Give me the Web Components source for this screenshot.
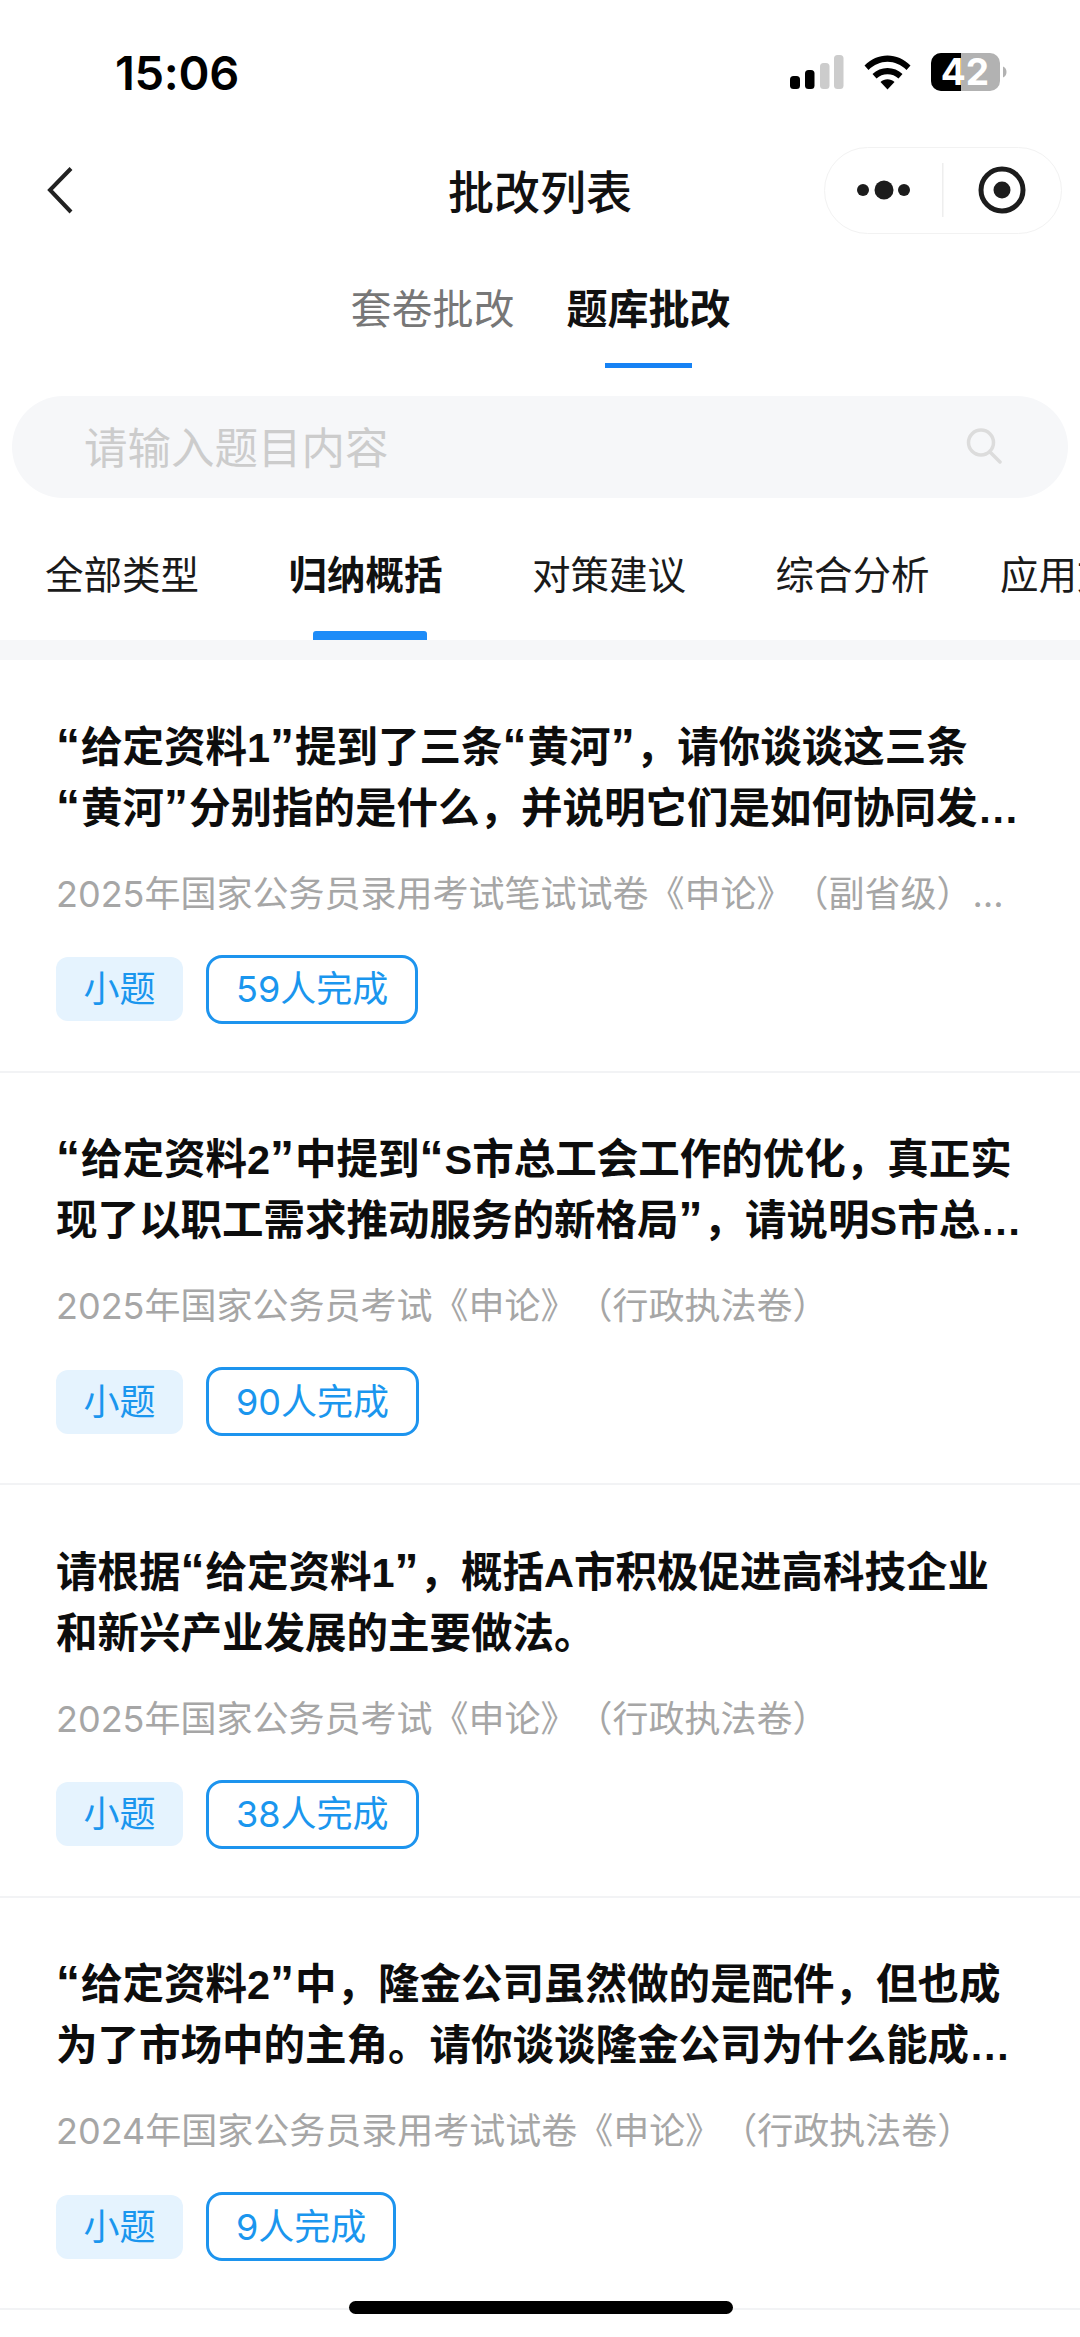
<!DOCTYPE html>
<html lang="zh-CN"><head><meta charset="utf-8"><title>批改列表</title>
<style>
html,body{margin:0;padding:0;background:#fff}
body{width:1080px;height:2337px;overflow:hidden;font-family:Inter,"Noto Sans CJK SC",sans-serif;color:#111;text-spacing-trim:space-all}
</style></head><body>
<app-screen>
  <status-bar time="15:06" battery="42"></status-bar>
  <nav-bar title="批改列表"></nav-bar>
  <mode-tabs><mode-tab>套卷批改</mode-tab><mode-tab active>题库批改</mode-tab></mode-tabs>
  <search-box placeholder="请输入题目内容"></search-box>
  <type-tabs>
    <type-tab>全部类型</type-tab><type-tab active>归纳概括</type-tab><type-tab>对策建议</type-tab><type-tab>综合分析</type-tab><type-tab last>应用文写作</type-tab>
  </type-tabs>
  <question-list>
    <question-card source="2025年国家公务员录用考试笔试试卷《申论》（副省级）…" kind="小题" done="59人完成"><i>“</i><span>给定资料1</span><i>”</i><span>提到了三条</span><i>“</i><span>黄河</span><i>”</i><span>，请你谈谈这三条</span><i>“</i><span>黄河</span><i>”</i><span>分别指的是什么，并说明它们是如何协同发…</span></question-card>
    <question-card source="2025年国家公务员考试《申论》（行政执法卷）" kind="小题" done="90人完成"><i>“</i><span>给定资料2</span><i>”</i><span>中提到</span><i>“</i><span>S市总工会工作的优化，真正实</span><span>现了以职工需求推动服务的新格局</span><i>”</i><span>，请说明S市总…</span></question-card>
    <question-card source="2025年国家公务员考试《申论》（行政执法卷）" kind="小题" done="38人完成"><span>请根据</span><i>“</i><span>给定资料1</span><i>”</i><span>，概括A市积极促进高科技企业</span><span>和新兴产业发展的主要做法。</span></question-card>
    <question-card source="2024年国家公务员录用考试试卷《申论》（行政执法卷）" kind="小题" done="9人完成"><i>“</i><span>给定资料2</span><i>”</i><span>中，隆金公司虽然做的是配件，但也成</span><span>为了市场中的主角。请你谈谈隆金公司为什么能成…</span></question-card>
  </question-list>
  <home-bar></home-bar>
</app-screen>
<script>
function def(name, css, html){
  customElements.define(name, class extends HTMLElement{
    connectedCallback(){
      if(this.shadowRoot) return;
      const r=this.attachShadow({mode:'open'});
      const h = typeof html==='function'? html(this): html;
      r.innerHTML='<style>'+css+'</style>'+h;
    }
  });
}
def('app-screen',':host{display:flex;flex-direction:column;position:relative;width:1080px;height:2337px;overflow:hidden;background:#fff}','<slot></slot>');

def('status-bar',`
:host{display:flex;align-items:center;height:127px;box-sizing:border-box;padding:16px 0 0 115px}
.t{font:600 47px/1 Inter,"Liberation Sans",sans-serif;letter-spacing:-.3px;color:#000;margin-top:1px}
.sp{flex:1}
svg{display:block}
.bat{font:700 37px Inter,"Liberation Sans",sans-serif}
`,e=>`<span class="t">${e.getAttribute('time')}</span><span class="sp"></span>
<svg width="300" height="60" viewBox="780 41 300 60">
<rect x="790" y="75" width="10" height="13" rx="3.5"/>
<rect x="805" y="69" width="9.5" height="19" rx="3.5"/>
<rect x="820" y="62" width="9.5" height="26" rx="3.5" fill="#ccc"/>
<rect x="834" y="54" width="9.5" height="34" rx="3.5" fill="#ccc"/>
<path d="M864.5 64.5C871 58 879 54.5 887.5 54.5S904 58 910.5 64.5L906.5 69C901 63.8 894.500 60.800 887.500 60.800S874 63.800 868.500 69Z"/>
<path d="M872.500 73C876.500 69.200 881.800 67 887.500 67S898.500 69.200 902.500 73L898.500 77.500C895.500 74.700 891.700 73.200 887.500 73.200S879.500 74.700 876.500 77.500Z"/>
<path d="M880.500 81C882.500 79.300 885 78.300 887.500 78.300S892.500 79.300 894.500 81L887.500 88.500Z"/>
<defs><clipPath id="l"><rect x="931" y="52" width="30" height="38"/></clipPath></defs>
<rect x="931" y="52" width="69" height="38" rx="10" fill="#b2b2b2"/>
<rect x="931" y="52" width="69" height="38" rx="10" clip-path="url(#l)"/>
<path d="M1003 65.500C1005.500 66.500 1006.500 68.500 1006.500 71S1005.500 75.500 1003 76.500Z" fill="#b2b2b2"/>
<text x="965" y="84" text-anchor="middle" class="bat" fill="#fff">${e.getAttribute('battery')}</text>
</svg>`);

def('nav-bar',`
:host{display:grid;grid-template-columns:302px 1fr 302px;align-items:center;height:127px;box-sizing:border-box;padding-bottom:1px}
h1{margin:3px 0 0;text-align:center;font:500 46px/1 Inter,"Noto Sans CJK SC",sans-serif;color:#111;white-space:nowrap}
.back{display:block;width:30px;height:50px;margin-left:46px}
.cap{justify-self:end;position:relative;width:238px;height:87px;margin-right:18px;box-sizing:border-box;border:1.5px solid #f2f2f2;border-radius:44px;background:#fff}
.cap svg{position:absolute;left:-1.5px;top:-1.5px;display:block}
`,e=>`<svg class="back" viewBox="0 0 30 50"><path d="M25 3.500 4 25 25 47" fill="none" stroke="#222" stroke-width="4"/></svg>
<h1>${e.getAttribute('title')}</h1>
<div class="cap"><svg width="238" height="87" viewBox="823 147 238 87">
<circle cx="862" cy="191" r="6" fill="#1c1c1c"/><circle cx="883" cy="191" r="9.500" fill="#1c1c1c"/><circle cx="903" cy="191" r="6" fill="#1c1c1c"/>
<rect x="941" y="164" width="1.500" height="54" fill="#eee"/>
<circle cx="1001" cy="191" r="21" fill="none" stroke="#1c1c1c" stroke-width="5"/><circle cx="1001" cy="191" r="8.500" fill="#1c1c1c"/>
</svg></div>`);

def('mode-tabs',':host{display:flex;justify-content:center;gap:51px;height:114px;padding-left:1px;box-sizing:border-box}','<slot></slot>');
def('mode-tab',`
:host{display:flex;flex-direction:column;align-items:center;width:165px;font:400 41px/1 Inter,"Noto Sans CJK SC",sans-serif;color:#777;padding-top:35px;box-sizing:border-box}
:host([active]){color:#111;font-weight:700}
i{display:none;width:87px;height:5px;margin-top:33px;background:#1682f4}
:host([active]) i{display:block}
`,'<slot></slot><i></i>');

def('search-box',`
:host{display:flex;align-items:center;justify-content:space-between;margin:28px 12px 0;height:102px;box-sizing:border-box;padding:0 66px 0 72px;border-radius:51px;background:#f6f7f9}
span{font:400 43.500px/1 Inter,"Noto Sans CJK SC",sans-serif;color:#ccc;margin-top:3px}
svg{display:block;margin-top:-2px}
`,e=>`<span>${e.getAttribute('placeholder')}</span><svg width="36" height="36" viewBox="0 0 36 36" fill="none" stroke="#dcdcdc" stroke-width="3.500"><circle cx="15" cy="14.500" r="12.500"/><path d="M24 24 34 34" stroke-linecap="round"/></svg>`);

def('type-tabs',`
:host{display:flex;gap:89.500px;height:142px;box-sizing:border-box;padding-left:45px;overflow:hidden;white-space:nowrap}
`,'<slot></slot>');
def('type-tab',`
:host{display:flex;flex-direction:column;align-items:center;flex:none;font:400 38.500px/1 Inter,"Noto Sans CJK SC",sans-serif;color:#1a1a1a;padding-top:58px;box-sizing:border-box;height:142px}
:host([active]){font-weight:700;color:#111}
:host([last]){margin-left:-19px}
i{display:none;width:114px;height:9px;margin-top:36.500px;margin-left:8px;border-radius:3px 3px 0 0;background:#1d8cf8}
:host([active]) i{display:block}
`,'<slot></slot><i></i>');

def('question-list',':host{display:block;border-top:20px solid #f6f7f9}','<slot></slot>');
def('question-card',`
:host{display:flex;flex-direction:column;align-items:flex-start;height:412.500px;box-sizing:border-box;padding:56.500px 58px 0 56px;border-bottom:2px solid #f2f3f5}
.q{margin:0;font:600 41.500px/61px "Liberation Sans","Noto Sans CJK SC",sans-serif;color:#0d0d0d;height:122px;overflow:hidden}
::slotted(i){font-style:normal;font-size:48px;letter-spacing:1px;line-height:1px}
.s{font:400 36px/50px Inter,"Noto Sans CJK SC",sans-serif;color:#a6a6a6;margin-top:30px;white-space:nowrap}
.tags{display:flex;align-items:center;gap:23px;margin-top:36px}
.k,.d{display:flex;align-items:center;box-sizing:border-box;font:400 36px/1 Inter,"Noto Sans CJK SC",sans-serif;color:#1a96ee}
.k{height:64px;padding:0 27.500px;border-radius:12px;background:#e5f3fe}
.d{height:69px;padding:0 27px 0 27px;border:3px solid #1d94ee;border-radius:16px;background:#fff}
`,e=>`<p class="q"><slot></slot></p><div class="s">${e.getAttribute('source')}</div><div class="tags"><span class="k">${e.getAttribute('kind')}</span><span class="d">${e.getAttribute('done')}</span></div>`);

def('home-bar',':host{position:absolute;left:349px;top:2301px;width:384px;height:13px;border-radius:7px;background:#000}','');
</script>
</body></html>
